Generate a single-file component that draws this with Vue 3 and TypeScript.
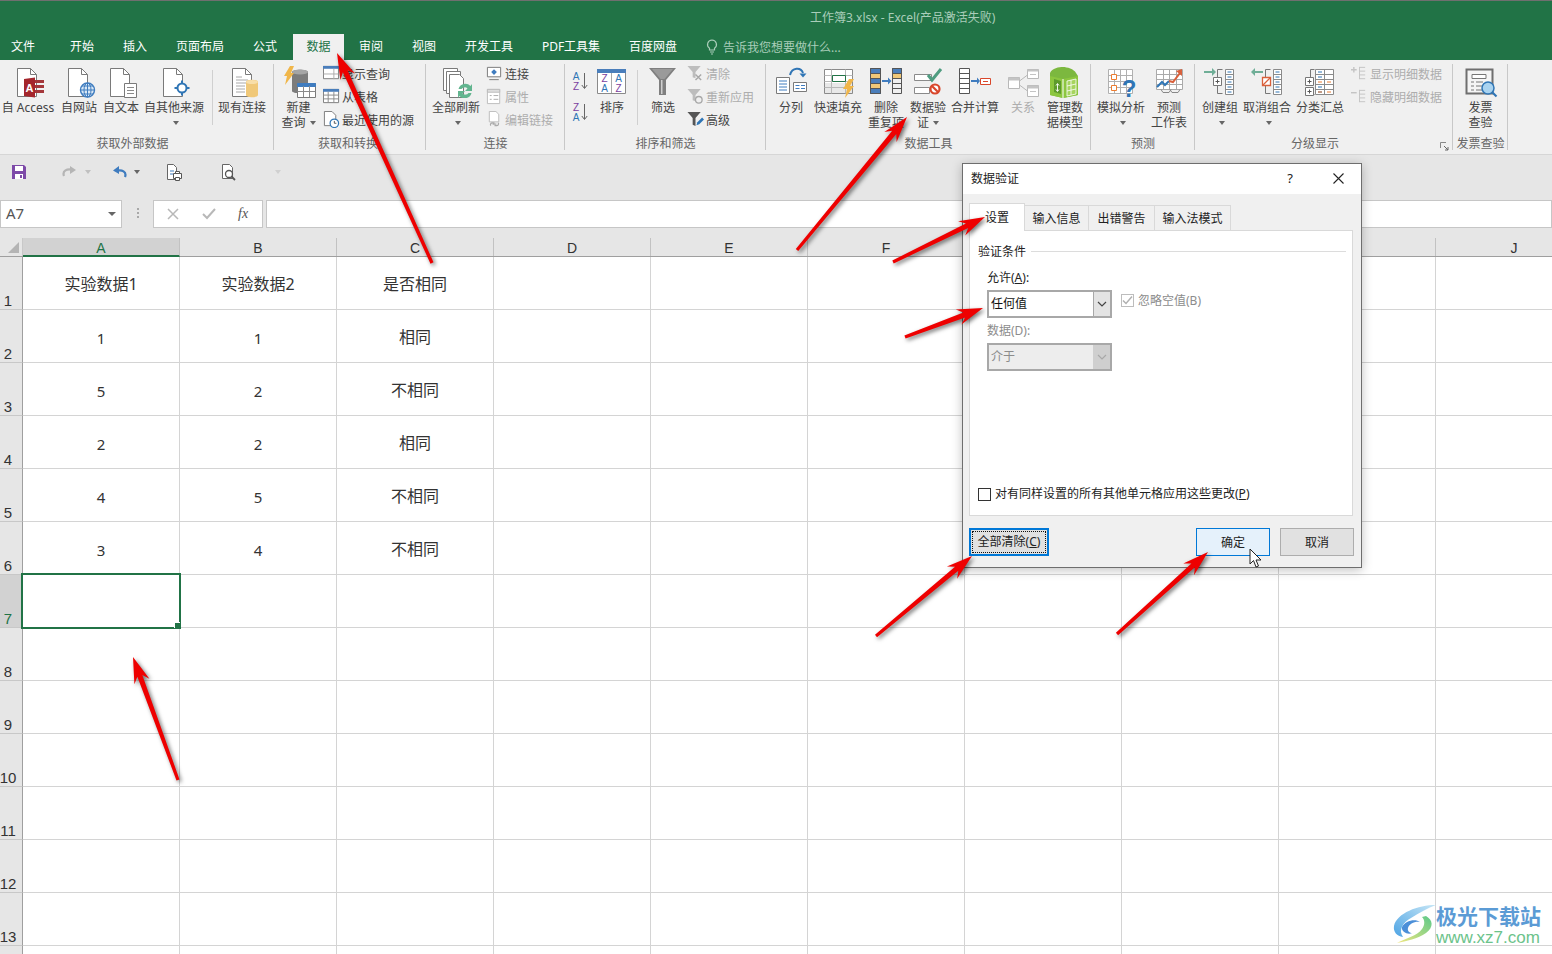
<template>
  <div class="app">
    <!-- icon sheet -->
    <svg class="sheet" width="0" height="0">
      <defs>
        <symbol id="access" viewBox="0 0 34 32"><path d="M6.500 2.500h13l6 6v22h-19z" fill="#fff" stroke="#7a7a7a"/><path d="M19.500 2.500v6h6" fill="none" stroke="#7a7a7a"/><path d="M22 14h11v3H22zM22 19h11v3H22zM22 24h11v3H22z" fill="#a4373a"/><path d="M13 13l11-1.500v20L13 30z" fill="#a4262c"/><text x="18.500" y="26" font-size="11" font-weight="700" fill="#fff" text-anchor="middle" font-family="Liberation Sans">A</text></symbol>
        <symbol id="web" viewBox="0 0 34 32"><path d="M6.500 2.500h13l6 6v22h-19z" fill="#fff" stroke="#7a7a7a"/><path d="M19.500 2.500v6h6" fill="none" stroke="#7a7a7a"/><circle cx="25.500" cy="24" r="7" fill="#d9e8f6" stroke="#3f7cbf" stroke-width="1.400"/><path d="M18.500 24h14M25.500 17v14M20 20h11M20 28h11" stroke="#3f7cbf" fill="none"/><ellipse cx="25.500" cy="24" rx="3.500" ry="7" fill="none" stroke="#3f7cbf"/></symbol>
        <symbol id="textdoc" viewBox="0 0 34 32"><path d="M6.500 2.500h13l6 6v22h-19z" fill="#fff" stroke="#7a7a7a"/><path d="M19.500 2.500v6h6" fill="none" stroke="#7a7a7a"/><path d="M20.500 17.500h12v14h-12z" fill="#fff" stroke="#7a7a7a"/><path d="M23 21.500h7M23 24.500h7M23 27.500h7" stroke="#8a8a8a"/></symbol>
        <symbol id="other" viewBox="0 0 34 32"><path d="M6.500 2.500h13l6 6v22h-19z" fill="#fff" stroke="#7a7a7a"/><path d="M19.500 2.500v6h6" fill="none" stroke="#7a7a7a"/><circle cx="25" cy="22" r="4.500" fill="#fff" stroke="#2f75b5" stroke-width="2"/><path d="M25 14.500v3.500M25 26v3.500M17.500 22H21M29 22h3.500" stroke="#2f75b5" stroke-width="2"/></symbol>
        <symbol id="existing" viewBox="0 0 34 32"><path d="M7.500 2.500h13l6 6v22h-19z" fill="#fff" stroke="#7a7a7a"/><path d="M20.500 2.500v6h6" fill="none" stroke="#7a7a7a"/><path d="M11 11h6M11 14h12M11 17h10M11 20h9M11 23h9M11 26h9" stroke="#a8a8a8"/><path d="M21 16c0-3 12-3 12 0v13c0 3-12 3-12 0z" fill="#f0c878"/><ellipse cx="27" cy="16" rx="6" ry="2" fill="#f8dea8"/></symbol>
        <symbol id="newquery" viewBox="0 0 34 32"><path d="M10 6c0-3 16-3 16 0v19c0 3-16 3-16 0z" fill="#7c7c7c"/><ellipse cx="18" cy="6" rx="8" ry="2.500" fill="#a5a5a5"/><path d="M8 0h4l-3 7h3L3 19l2-9H2z" fill="#f0b64a"/><path d="M15.500 17.500h18v14h-18z" fill="#fff" stroke="#7a7a7a"/><path d="M15.500 17.500h18v3h-18z" fill="#3f7cbf" stroke="#3f7cbf"/><path d="M15.500 25.500h18M21.500 20v11M27.500 20v11" stroke="#8a8a8a"/></symbol>
        <symbol id="refresh" viewBox="0 0 34 32"><path d="M4.500 2.500h14v22h-14z" fill="#fff" stroke="#7a7a7a"/><path d="M7.500 5.500h14v22h-14z" fill="#fff" stroke="#7a7a7a"/><path d="M10.500 8.500h10l4 4v19h-14z" fill="#fff" stroke="#7a7a7a"/><path d="M19.500 23a7 7 0 0 1 12-3l1.500-2v7h-7l2.500-2.500a4 4 0 0 0-6 .5zM32.500 27a7 7 0 0 1-12 3l-1.500 2v-7h7l-2.500 2.500a4 4 0 0 0 6-.5z" fill="#62b58f"/></symbol>
        <symbol id="sort" viewBox="0 0 34 32"><path d="M2.500 3.500h28v24h-28z" fill="#fff" stroke="#8a8a8a"/><path d="M2 3h29v4H2z" fill="#4a7ebb"/><path d="M16.500 7v20" stroke="#a8a8a8"/><g font-family="Liberation Sans" font-size="10" text-anchor="middle"><text x="9.500" y="16" fill="#7b3fa0">Z</text><text x="23.500" y="16" fill="#2f75b5">A</text><text x="9.500" y="26" fill="#2f75b5">A</text><text x="23.500" y="26" fill="#7b3fa0">Z</text></g></symbol>
        <symbol id="funnel" viewBox="0 0 34 32"><path d="M3 2h27L20 14v15h-7V14z" fill="#7f7f7f"/><path d="M6 3h21L18.500 13h-4z" fill="#9a9a9a"/><path d="M15 14h1.500v14H15z" fill="#cfcfcf"/></symbol>
        <symbol id="split" viewBox="0 0 34 32"><path d="M2.500 11.500h13v16h-13z" fill="#fff" stroke="#7a7a7a"/><path d="M5 15h8M5 18h8M5 21h8M5 24h8" stroke="#3f7cbf"/><path d="M19.500 16.500h13v9h-13z" fill="#fff" stroke="#7a7a7a"/><path d="M21.500 19.500h4M27 19.500h4M21.500 22.500h4M27 22.500h4" stroke="#3f7cbf"/><path d="M16 9c2-8 11-8 13-2" fill="none" stroke="#2f75b5" stroke-width="2"/><path d="M25.500 7.500h7l-3.500 4z" fill="#2f75b5"/></symbol>
        <symbol id="flash" viewBox="0 0 34 32"><path d="M3.500 3.500h28v24h-28z" fill="#fff" stroke="#8a8a8a"/><path d="M4 17h27v10H4z" fill="#e8e8e8"/><path d="M3.500 9.500h28M3.500 15.500h28M3.500 21.500h28M10.500 3.500v24M24.500 3.500v24" stroke="#b8b8b8"/><path d="M11.500 9.500h13v6h-13z" fill="#fff" stroke="#217346"/><path d="M28 13h5l-4 7h4L24 32l2-9h-4z" fill="#f0b64a"/></symbol>
        <symbol id="dedupe" viewBox="0 0 34 32"><path d="M1 2h11v26H1z" fill="#4a7ebb"/><path d="M1 7.500h11v5H1zM1 18h11v5H1z" fill="#f0c878"/><path d="M1.500 2.500h10v25h-10zM1.500 7.500h10M1.500 12.500h10M1.500 17.500h10M1.500 22.500h10" fill="none" stroke="#555"/><path d="M23 2h10v6H23z" fill="#4a7ebb"/><path d="M23 8h10v5H23z" fill="#f0c878"/><path d="M23.500 2.500h9v25h-9zM23.500 7.500h9M23.500 12.500h9M23.500 17.500h9M23.500 22.500h9" fill="none" stroke="#555"/><path d="M13 14h6v-2.500l3.500 3.500-3.500 3.500V16h-6z" fill="#3f7cbf"/></symbol>
        <symbol id="validate" viewBox="0 0 34 32"><path d="M3.500 8.500h17v6h-17zM3.500 21.500h15v6h-15z" fill="#fff" stroke="#8a8a8a"/><path d="M17 9l4 5 9-11" fill="none" stroke="#4f9c80" stroke-width="3"/><circle cx="24" cy="23" r="4.500" fill="#fff" stroke="#d9472b" stroke-width="2.200"/><path d="M21 20l6 6" stroke="#d9472b" stroke-width="2.200"/></symbol>
        <symbol id="consolidate" viewBox="0 0 34 32"><path d="M1.500 2.500h10v25h-10zM1.500 7.500h10M1.500 12.500h10M1.500 17.500h10M1.500 22.500h10" fill="#fff" stroke="#555"/><path d="M13 14h6v-2.500l3 3.500-3 3.500V16h-6z" fill="#3f7cbf"/><path d="M22.500 12.500h10v6h-10z" fill="#fff" stroke="#d9472b"/><path d="M25 15.500h5" stroke="#d9472b"/></symbol>
        <symbol id="relation" viewBox="0 0 34 32"><g fill="#fff" stroke="#b8b8b8"><path d="M2.500 11.500h11v11h-11zM21.500 3.500h11v9h-11zM21.500 19.500h11v11h-11z"/><path d="M13.500 15l8-6M13.500 19l8 6" fill="none"/></g><path d="M2.500 11.500h11v3h-11zM21.500 3.500h11v2h-11zM21.500 19.500h11v3h-11z" fill="#c4c4c4"/><path d="M24 8.500h6M24 25.500h6" stroke="#c4c4c4"/></symbol>
        <symbol id="model" viewBox="0 0 34 32"><path d="M2 7c2-5 9-6 13-6s11 2 13 6l2 3v19l-15 3-13-3z" fill="#7cb83f"/><path d="M2 10l13 3 15-3v19l-15 3-13-3z" fill="#8cc63f"/><path d="M15 13v19" stroke="#fff"/><path d="M19 15l9-2v15l-9 2z" fill="#a6d45e" stroke="#fff" stroke-width=".8"/><path d="M19 20l9-2M19 25l9-2M23 14v15" stroke="#fff" stroke-width=".8"/><path d="M6 13l7 2v13l-7-2z" fill="#5d9a2c"/><path d="M9.500 18v7M8 19.500l1.500-2 1.500 2M8 23.500l1.500 2 1.500-2" fill="none" stroke="#fff" stroke-width=".9"/></symbol>
        <symbol id="whatif" viewBox="0 0 34 32"><path d="M4.500 3.500h24v25h-24z" fill="#fff"/><path d="M4.500 3.500h24M4.500 9.500h24M4.500 15.500h24M4.500 21.500h24M4.500 27.500h24M4.500 3.500v24M10.500 3.500v24M16.500 3.500v24M22.500 3.500v24M28.500 3.500v24" fill="none" stroke="#b0b0b0"/><path d="M7.500 8.500h5v5h-5zM7.500 19.500h5v5h-5z" fill="#fff" stroke="#ed7d31"/><text x="25" y="31" font-size="24" font-weight="700" fill="#2f75b5" text-anchor="middle" font-family="Liberation Sans">?</text></symbol>
        <symbol id="forecast" viewBox="0 0 34 32"><path d="M4.500 3.500h26v20h-26z" fill="#fff"/><path d="M4.500 3.500h26M4.500 8.500h26M4.500 13.500h26M4.500 18.500h26M4.500 23.500h26M4.500 3.500v20M11.500 3.500v20M17.500 3.500v20M24.500 3.500v20M30.500 3.500v20" fill="none" stroke="#aaa"/><path d="M5 21l5-5 3 3 4-4" fill="none" stroke="#2f75b5" stroke-width="2"/><path d="M17 15l4 1 7-9" fill="none" stroke="#d9603b" stroke-width="2"/><path d="M24 5l6-2 0 7z" fill="#d9603b"/><path d="M9 23.500l2 3h6l2-3M18 23.500l2 3h6l2-3" fill="none" stroke="#888"/></symbol>
        <symbol id="group" viewBox="0 0 34 32"><path d="M1 5h8V2l4 4-4 4V7H1z" fill="#6fae97"/><path d="M19.500 3.500h-5v24h5" fill="none" stroke="#777"/><path d="M10.500 11.500h8v8h-8z" fill="#fff" stroke="#777"/><path d="M12.500 15.500h4M14.500 13.500v4" stroke="#555"/><path d="M22.500 3.500h8v25h-8zM22.500 8.500h8M22.500 13.500h8M22.500 18.500h8M22.500 23.500h8" fill="#fff" stroke="#8a8a8a"/><path d="M24.500 6h4M24.500 11h4M24.500 16h4M24.500 21h4M24.500 26h4" stroke="#2f75b5"/></symbol>
        <symbol id="ungroup" viewBox="0 0 34 32"><path d="M13 5H5V2L1 6l4 4V7h8z" fill="#6fae97"/><path d="M20.500 3.500h-5v24h5" fill="none" stroke="#777"/><path d="M12.500 11.500h8v8h-8z" fill="#fff" stroke="#d9603b" stroke-width="1.300"/><path d="M13 19l7-7" stroke="#d9603b" stroke-width="1.300"/><path d="M23.500 3.500h8v25h-8zM23.500 8.500h8M23.500 13.500h8M23.500 18.500h8M23.500 23.500h8" fill="#fff" stroke="#8a8a8a"/><path d="M25.500 6h4M25.500 11h4M25.500 16h4M25.500 21h4M25.500 26h4" stroke="#2f75b5"/></symbol>
        <symbol id="subtotal" viewBox="0 0 34 32"><path d="M11.500 3.500h-4v8M11.500 28.500h-4v-1" fill="none" stroke="#777"/><path d="M2.500 11.500h8v8h-8zM2.500 21.500h8v8h-8z" fill="#fff" stroke="#777"/><path d="M4.500 15.500h4M6.500 13.500v4M4.500 25.500h4M6.500 23.500v4" stroke="#555"/><path d="M12.500 3.500h18v25h-18zM12.500 8.500h18M12.500 13.500h18M12.500 18.500h18M12.500 23.500h18M21.500 3.500v25" fill="#fff" stroke="#8a8a8a"/><path d="M15 6h4M15 11h4M15 21h4M15 26h4" stroke="#2f75b5"/><path d="M15 16h4M24 16h4M24 26h4M15 26h4" stroke="#ed7d31"/></symbol>
        <symbol id="invoice" viewBox="0 0 34 32"><path d="M2.500 3.500h26v24h-26z" fill="#f5f5f5" stroke="#6f6f6f" stroke-width="2"/><path d="M8 8.500h14v4H8z" fill="#fff" stroke="#777"/><path d="M7 16h3M12 16h7M7 20h3M12 20h6M7 24h3M12 24h6" stroke="#777"/><circle cx="24" cy="22" r="6" fill="#a9d3f0" stroke="#2f75b5" stroke-width="1.500"/><path d="M28.500 26.500l4 4" stroke="#2f75b5" stroke-width="2.200"/></symbol>

        <symbol id="s-query" viewBox="0 0 18 18"><path d="M.5 1.500h16v13H.5z" fill="#fff" stroke="#7a7a7a"/><path d="M0 1h17v3H0z" fill="#4a7ebb"/><path d="M.5 9.500h16M11.500 4v11" stroke="#aaa"/></symbol>
        <symbol id="s-table" viewBox="0 0 18 18"><path d="M.5 1.500h16v14H.5z" fill="#fff" stroke="#7a7a7a"/><path d="M0 1h17v3H0z" fill="#4a7ebb"/><path d="M.5 7.500h16M.5 11.500h16M5.500 4v11M11.500 4v11" stroke="#8a8a8a"/></symbol>
        <symbol id="s-recent" viewBox="0 0 18 18"><path d="M1.500 .5h8l4 4v11h-12z" fill="#fff" stroke="#7a7a7a"/><circle cx="12" cy="13" r="4.500" fill="#fff" stroke="#2f75b5" stroke-width="1.300"/><path d="M12 10.500V13h2.200" fill="none" stroke="#555"/></symbol>
        <symbol id="s-conn" viewBox="0 0 18 18"><path d="M1.500 2.500h14v10h-14z" fill="#fff" stroke="#777"/><path d="M8.500 4.500l3 3-3 3-3-3z" fill="#3f7cbf"/><path d="M3.500 15.500h10" stroke="#777"/></symbol>
        <symbol id="s-props" viewBox="0 0 18 18"><path d="M1.500 1.500h13v15h-13z" fill="#fff" stroke="#bbb"/><path d="M1.500 1.500h13v3h-13z" fill="#ddd" stroke="#bbb"/><path d="M4 8h2M8 8h5M4 12h2M8 12h5" stroke="#aaa"/></symbol>
        <symbol id="s-link" viewBox="0 0 18 18"><path d="M3.500 .5h7l3 3v8h-10z" fill="#fff" stroke="#bbb"/><path d="M5 15.500a2 2 0 0 1 2-3h2M13 12.500a2 2 0 0 1-2 3H9M7 14h4" fill="none" stroke="#aaa" stroke-width="1.300"/></symbol>
        <symbol id="s-az" viewBox="0 0 18 22"><g font-family="Liberation Sans" font-size="10" text-anchor="middle"><text x="5" y="9" fill="#2f75b5">A</text><text x="5" y="19" fill="#7b3fa0">Z</text></g><path d="M13.500 2v15M10.800 14l2.700 3.500 2.700-3.500" fill="none" stroke="#666"/></symbol>
        <symbol id="s-za" viewBox="0 0 18 22"><g font-family="Liberation Sans" font-size="10" text-anchor="middle"><text x="5" y="9" fill="#7b3fa0">Z</text><text x="5" y="19" fill="#2f75b5">A</text></g><path d="M13.500 2v15M10.800 14l2.700 3.500 2.700-3.500" fill="none" stroke="#666"/></symbol>
        <symbol id="s-clear" viewBox="0 0 18 18"><path d="M.5 1h14L9 7.500V14l-3-1V7.500z" fill="#bdbdbd"/><path d="M9 10l6 6M15 10l-6 6" stroke="#a8a8a8" stroke-width="1.500"/></symbol>
        <symbol id="s-reapply" viewBox="0 0 18 18"><path d="M.5 1h14L9 7.500V14l-3-1V7.500z" fill="#bdbdbd"/><circle cx="12.500" cy="12.500" r="3.500" fill="none" stroke="#a8a8a8" stroke-width="1.400"/></symbol>
        <symbol id="s-adv" viewBox="0 0 18 18"><path d="M.5 1h14L9 7.500V16l-3-1.500v-7z" fill="#555"/><path d="M10 15l1-3 5-5 2 2-5 5z" fill="#2f75b5"/></symbol>
        <symbol id="s-show" viewBox="0 0 18 18"><path d="M3 2v6M0 5h6" stroke="#c4c4c4" stroke-width="1.500"/><path d="M9 2.500h6M9 6.500h6M9 10.500h6M9 14.500h6M9 2v13" stroke="#c4c4c4"/></symbol>
        <symbol id="s-hide" viewBox="0 0 18 18"><path d="M0 5h6" stroke="#c4c4c4" stroke-width="1.500"/><path d="M9 2.500h6M9 6.500h6M9 10.500h6M9 14.500h6M9 2v13" stroke="#c4c4c4"/></symbol>
      </defs>
    </svg>

    <header class="titlebar">
      <div class="title">工作簿3.xlsx - Excel(产品激活失败)</div>
      <nav class="tabs">
        <div
          v-for="t in tabs"
          :key="t.name"
          class="tab"
          :class="{ active: t.name === '数据' }"
          :style="{ width: t.w + 'px' }"
        >{{ t.name }}</div>
        <div class="tellme">
          <svg width="12" height="16" viewBox="0 0 12 16"><path d="M6 1a4.500 4.500 0 0 0-2.500 8.200V11h5V9.200A4.500 4.500 0 0 0 6 1zM4 13h4M5 15h2" fill="none" stroke="#a9cdb9" stroke-width="1.200"/></svg>
          <span>告诉我您想要做什么...</span>
        </div>
      </nav>
    </header>

    <section class="ribbon">
      <div
        v-for="g in groups"
        :key="g.label"
        class="group"
        :style="{ width: g.w + 'px' }"
      >
        <div class="items">
          <template v-for="(it, i) in g.items" :key="i">
            <div v-if="it.kind === 'big'" class="big" :class="{ off: it.off }" :style="{ width: it.w + 'px' }">
              <svg class="big-ic" width="34" height="32"><use :href="'#' + it.icon" /></svg>
              <div v-for="(l, n) in it.lines" :key="n" class="line">
                {{ l }}<i v-if="it.caret && n === it.lines.length - 1" class="caret"></i>
              </div>
            </div>
            <div v-else-if="it.kind === 'stack'" class="stack">
              <div v-for="r in it.rows" :key="r.text" class="small" :class="{ off: r.off }">
                <svg width="17" height="17"><use :href="'#' + r.icon" /></svg>
                <span>{{ r.text }}</span>
              </div>
            </div>
            <div v-else-if="it.kind === 'az'" class="az" :style="{ width: it.w + 'px' }">
              <svg width="18" height="22"><use href="#s-az" /></svg>
              <svg width="18" height="22"><use href="#s-za" /></svg>
            </div>
            <div v-else class="sep" :class="{ line: it.line }" :style="{ width: it.w + 'px' }"></div>
          </template>
        </div>
        <div class="group-label" :style="{ paddingRight: (g.pad || 0) + 'px' }">{{ g.label }}</div>
        <svg v-if="g.launcher" class="launcher" width="9" height="9" viewBox="0 0 9 9"><path d="M.5 6V.5H6" fill="none" stroke="#888"/><path d="M4 4l4 4M8 5v3H5" fill="none" stroke="#666"/></svg>
      </div>
    </section>

    <div class="qat">
      <svg width="16" height="16" viewBox="0 0 16 16"><path d="M1 1h12l2 2v12H1z" fill="#7d4aa8"/><path d="M4 2h8v5H4z" fill="#fff"/><path d="M4 10h8v5H4z" fill="#fff"/><path d="M9 11h2v3H9z" fill="#7d4aa8"/></svg>
      <svg class="q-redo" width="15" height="14" viewBox="0 0 15 14"><path d="M2 11c-2-5 3-8 9-6" fill="none" stroke="#b5b5b5" stroke-width="2.200"/><path d="M8 1l6 4-6 4z" fill="#b5b5b5"/></svg>
      <i class="caret q-c1 soft"></i>
      <svg class="q-undo" width="15" height="14" viewBox="0 0 15 14"><path d="M13 12c2-5-3-8-9-6" fill="none" stroke="#3f7cbf" stroke-width="2.200"/><path d="M7 1L1 5.500 7 9z" fill="#3f7cbf"/></svg>
      <i class="caret q-c2"></i>
      <svg class="q-print" width="17" height="17" viewBox="0 0 17 17"><path d="M1.500 .5h6l3 3v12h-9z" fill="#fff" stroke="#666"/><path d="M4 7h4M4 10h3" stroke="#3f7cbf"/><path d="M7.500 9.500h8v5h-8z" fill="#fff" stroke="#555"/><path d="M9.500 7.500h4v2h-4zM9.500 13.500h4v3h-4z" fill="#fff" stroke="#555"/></svg>
      <svg class="q-zoom" width="16" height="17" viewBox="0 0 16 17"><path d="M1.500 .5h7l3 3v11h-10z" fill="#fff" stroke="#666"/><circle cx="8" cy="10" r="3.500" fill="#fff" stroke="#555" stroke-width="1.300"/><path d="M10.500 12.500l3.500 3.500" stroke="#555" stroke-width="1.800"/></svg>
      <i class="caret q-c3 faint"></i>
    </div>

    <div class="formula">
      <div class="namebox"><span>A7</span><i class="caret dark"></i></div>
      <div class="dots"><b></b><b></b><b></b></div>
      <div class="fxbox">
        <svg width="12" height="12" viewBox="0 0 12 12"><path d="M1 1l10 10M11 1L1 11" stroke="#b8b8b8" stroke-width="1.500"/></svg>
        <svg width="14" height="12" viewBox="0 0 14 12"><path d="M1 6l4 4 8-9" fill="none" stroke="#b8b8b8" stroke-width="2"/></svg>
        <span class="fx">fx</span>
      </div>
      <div class="input"></div>
    </div>

    <div class="sheetgrid">
      <div class="headrow">
        <div class="corner"><i></i></div>
        <div v-for="c in cols" :key="c" class="colhead" :class="{ sel: c === 'A' }">{{ c }}</div>
      </div>
      <div v-for="(r, ri) in rows" :key="ri" class="row">
        <div class="rowhead" :class="{ sel: ri === 6 }"><span v-if="ri < 13">{{ ri + 1 }}</span></div>
        <div v-for="(c, ci) in cols" :key="c" class="cell" :class="{ num: /^\d+$/.test(r[ci] || '') }">
          {{ r[ci] }}
          <div v-if="ri === 6 && ci === 0" class="selection"><i></i></div>
        </div>
      </div>
    </div>

    <div class="dialog">
      <div class="dlg-title">
        <span class="dlg-name">数据验证</span>
        <span class="help">?</span>
        <svg width="11" height="11" viewBox="0 0 11 11"><path d="M.5.5l10 10M10.500.5l-10 10" stroke="#222" stroke-width="1.100"/></svg>
      </div>
      <div class="dlg-body">
        <div class="dlg-tabs">
          <div class="dlg-tab on" style="width: 56px">设置</div>
          <div class="dlg-tab" style="width: 64px">输入信息</div>
          <div class="dlg-tab" style="width: 66px">出错警告</div>
          <div class="dlg-tab" style="width: 76px">输入法模式</div>
        </div>
        <div class="pane">
          <div class="legend"><span>验证条件</span><i></i></div>
          <div class="fields">
            <div class="lab">允许(<u>A</u>):</div>
            <div class="sel-row">
              <div class="select"><span>任何值</span><em><svg width="10" height="6" viewBox="0 0 10 6"><path d="M1 1l4 4 4-4" fill="none" stroke="#444" stroke-width="1.200"/></svg></em></div>
              <div class="chk dis"><svg width="13" height="13" viewBox="0 0 13 13"><path d="M2 6.500l3 3 6-7" fill="none" stroke="#b0b0b0" stroke-width="1.500"/></svg></div>
              <span class="chk-label">忽略空值(B)</span>
            </div>
            <div class="lab gray">数据(D):</div>
            <div class="select disabled"><span>介于</span><em><svg width="10" height="6" viewBox="0 0 10 6"><path d="M1 1l4 4 4-4" fill="none" stroke="#a8a8a8" stroke-width="1.200"/></svg></em></div>
          </div>
          <div class="apply">
            <div class="chk"></div>
            <span>对有同样设置的所有其他单元格应用这些更改(<u>P</u>)</span>
          </div>
        </div>
        <div class="dlg-foot">
          <button type="button" class="btn focus"><span>全部清除(<u>C</u>)</span></button>
          <button type="button" class="btn hover">确定</button>
          <button type="button" class="btn">取消</button>
        </div>
      </div>
    </div>

    <svg class="cursor" width="14" height="21" viewBox="0 0 14 21"><path d="M1 1v15l3.500-3.500L7 19l2.500-1-2.500-6h5z" fill="#fff" stroke="#222"/></svg>

    <div class="mark">
      <svg width="48" height="56" viewBox="0 0 48 56">
        <defs>
          <linearGradient id="swirlA" x1="1" y1="0" x2="0" y2="1"><stop offset="0" stop-color="#c6e6f6" /><stop offset="1" stop-color="#4ea4e4" /></linearGradient>
          <linearGradient id="swirlB" x1="1" y1="0" x2="0" y2="1"><stop offset="0" stop-color="#5cc98a" /><stop offset="1" stop-color="#f2e77f" /></linearGradient>
        </defs>
        <path d="M43 3C25 3 4 11 1 24c-1 6 3 10 9 11C5 28 10 20 18 16 26 11 35 6 43 3z" fill="url(#swirlA)" />
        <path d="M9 25c3-6 13-9 18-5-5-1-11 2-12 6-1 3 2 5 4 5-4 2-11-1-10-6z" fill="#4b8fd8" />
        <path d="M33 14c7 4 8 11 0 17-8 6-20 8-29 10 9-5 20-7 25-14 3-4 3-9 0-12z" fill="url(#swirlB)" />
      </svg>
      <div class="mark-text">
        <div class="mark-cn">极光下载站</div>
        <div class="mark-en">www.xz7.com</div>
      </div>
    </div>

    <svg class="arrows" width="1552" height="954">
      <polygon v-for="(a, i) in arrows" :key="i" :points="arrowPoints(a)" fill="#ee0000" />
    </svg>
  </div>
</template>

<script setup lang="ts">
type Row = { icon: string; text: string; off?: boolean }
type Item = {
  kind: 'big' | 'stack' | 'az' | 'sep'
  w?: number
  icon?: string
  lines?: string[]
  caret?: boolean
  off?: boolean
  line?: boolean
  rows?: Row[]
}

const tabs = [
  { name: '文件', w: 46 },
  { name: '开始', w: 72 },
  { name: '插入', w: 34 },
  { name: '页面布局', w: 96 },
  { name: '公式', w: 34 },
  { name: '数据', w: 51 },
  { name: '审阅', w: 54 },
  { name: '视图', w: 52 },
  { name: '开发工具', w: 78 },
  { name: 'PDF工具集', w: 86 },
  { name: '百度网盘', w: 78 }
]

const big = (w: number, icon: string, lines: string[], caret = false, off = false): Item => ({
  kind: 'big', w, icon, lines, caret, off
})
const gap = (w: number, line = false): Item => ({ kind: 'sep', w, line })

const groups: { label: string; w: number; pad?: number; launcher?: boolean; items: Item[] }[] = [
  {
    label: '获取外部数据',
    w: 274,
    pad: 9,
    items: [
      big(56, 'access', ['自 Access']),
      big(46, 'web', ['自网站']),
      big(38, 'textdoc', ['自文本']),
      big(68, 'other', ['自其他来源', ''], true),
      gap(8, true),
      big(52, 'existing', ['现有连接'])
    ]
  },
  {
    label: '获取和转换',
    w: 152,
    pad: 4,
    items: [
      big(49, 'newquery', ['新建', '查询'], true),
      {
        kind: 'stack',
        rows: [
          { icon: 's-query', text: '显示查询' },
          { icon: 's-table', text: '从表格' },
          { icon: 's-recent', text: '最近使用的源' }
        ]
      }
    ]
  },
  {
    label: '连接',
    w: 139,
    items: [
      big(60, 'refresh', ['全部刷新', ''], true),
      {
        kind: 'stack',
        rows: [
          { icon: 's-conn', text: '连接' },
          { icon: 's-props', text: '属性', off: true },
          { icon: 's-link', text: '编辑链接', off: true }
        ]
      }
    ]
  },
  {
    label: '排序和筛选',
    w: 201,
    items: [
      { kind: 'az', w: 30 },
      big(34, 'sort', ['排序']),
      gap(16, true),
      big(36, 'funnel', ['筛选']),
      gap(6),
      {
        kind: 'stack',
        rows: [
          { icon: 's-clear', text: '清除', off: true },
          { icon: 's-reapply', text: '重新应用', off: true },
          { icon: 's-adv', text: '高级' }
        ]
      }
    ]
  },
  {
    label: '数据工具',
    w: 325,
    items: [
      big(50, 'split', ['分列']),
      big(44, 'flash', ['快速填充']),
      big(52, 'dedupe', ['删除', '重复项']),
      big(32, 'validate', ['数据验', '证'], true),
      big(62, 'consolidate', ['合并计算']),
      big(34, 'relation', ['关系'], false, true),
      big(50, 'model', ['管理数', '据模型'])
    ]
  },
  {
    label: '预测',
    w: 104,
    items: [
      big(60, 'whatif', ['模拟分析', ''], true),
      big(36, 'forecast', ['预测', '工作表'])
    ]
  },
  {
    label: '分级显示',
    w: 258,
    pad: 18,
    launcher: true,
    items: [
      big(50, 'group', ['创建组', ''], true),
      big(44, 'ungroup', ['取消组合', ''], true),
      big(62, 'subtotal', ['分类汇总']),
      {
        kind: 'stack',
        rows: [
          { icon: 's-show', text: '显示明细数据', off: true },
          { icon: 's-hide', text: '隐藏明细数据', off: true }
        ]
      }
    ]
  },
  {
    label: '发票查验',
    w: 55,
    items: [big(55, 'invoice', ['发票', '查验'])]
  }
]

const cols = ['A', 'B', 'C', 'D', 'E', 'F', 'G', 'H', 'I', 'J']

const rows: string[][] = [
  ['实验数据1', '实验数据2', '是否相同'],
  ['1', '1', '相同'],
  ['5', '2', '不相同'],
  ['2', '2', '相同'],
  ['4', '5', '不相同'],
  ['3', '4', '不相同'],
  [], [], [], [], [], [], [], []
]

// tail x/y, tip x/y
const arrows = [
  [432, 263, 337, 53],
  [797, 250, 907, 117],
  [893, 262, 985, 217],
  [905, 337, 983, 308],
  [876, 636, 972, 556],
  [1117, 634, 1208, 552],
  [178, 780, 133, 657]
]

const arrowPoints = ([tx, ty, hx, hy]: number[]) => {
  const len = Math.hypot(hx - tx, hy - ty)
  const ux = (hx - tx) / len
  const uy = (hy - ty) / len
  const at = (along: number, side: number) =>
    `${(hx - ux * along - uy * side).toFixed(1)},${(hy - uy * along + ux * side).toFixed(1)}`
  return [
    at(0, 0),
    at(26, 8),
    at(20, 2.6),
    at(len, 1.6),
    at(len, -1.6),
    at(20, -2.6),
    at(26, -8)
  ].join(' ')
}
</script>

<style>
html,
body {
  margin: 0;
  background: #fff;
}
</style>

<style scoped>
.app {
  position: relative;
  width: 1552px;
  height: 954px;
  overflow: hidden;
  font-family: "Noto Sans", "Noto Sans CJK SC", sans-serif;
  font-size: 12px;
  color: #444;
  background: #fff;
  display: flex;
  flex-direction: column;
}

.sheet {
  position: absolute;
}

/* title + tabs */
.titlebar {
  height: 60px;
  flex: none;
  box-sizing: border-box;
  background: #217346;
  border-top: 1px solid #6f6f6f;
  display: flex;
  flex-direction: column;
}

.title {
  height: 33px;
  line-height: 33px;
  padding-left: 810px;
  color: #a9cdb9;
}

.tabs {
  display: flex;
  height: 26px;
}

.tab {
  line-height: 25px;
  text-align: center;
  color: #fff;
  flex: none;
}

.tab.active {
  margin-left: 11px;
  background: #f0f0f0;
  color: #217346;
}

.tellme {
  display: flex;
  align-items: center;
  gap: 5px;
  padding-left: 14px;
  color: #a9cdb9;
  height: 25px;
}

/* ribbon */
.ribbon {
  height: 95px;
  flex: none;
  box-sizing: border-box;
  background: #f0f0f0;
  border-bottom: 1px solid #d6d6d6;
  display: flex;
}

.group {
  position: relative;
  flex: none;
  display: flex;
  flex-direction: column;
  box-sizing: border-box;
}

.group::after {
  content: "";
  position: absolute;
  right: 0;
  top: 4px;
  bottom: 4px;
  width: 1px;
  background: #c8c8c8;
}

.items {
  display: flex;
  height: 76px;
}

.big {
  flex: none;
  display: flex;
  flex-direction: column;
  align-items: center;
  padding-top: 6px;
  box-sizing: border-box;
  color: #444;
}

.big-ic {
  flex: none;
  margin-bottom: 2px;
}

.line {
  height: 15px;
  line-height: 15px;
  white-space: nowrap;
}

.big.off {
  color: #adadad;
}

.caret {
  display: inline-block;
  width: 0;
  height: 0;
  margin-left: 4px;
  vertical-align: 2px;
  border-left: 3.5px solid transparent;
  border-right: 3.5px solid transparent;
  border-top: 4px solid #666;
}

.stack {
  padding-top: 2px;
  flex: none;
}

.small {
  height: 23px;
  display: flex;
  align-items: center;
  gap: 2px;
  white-space: nowrap;
}

.small.off {
  color: #adadad;
}

.az {
  flex: none;
  display: flex;
  flex-direction: column;
  align-items: center;
  gap: 9px;
  padding-top: 11px;
  box-sizing: border-box;
}

.sep {
  flex: none;
  position: relative;
}

.sep.line::after {
  content: "";
  position: absolute;
  left: 50%;
  top: 10px;
  height: 55px;
  width: 1px;
  background: #d0d0d0;
}

.group-label {
  text-align: center;
  line-height: 16px;
  color: #666;
  white-space: nowrap;
}

.launcher {
  position: absolute;
  right: 4px;
  bottom: 3px;
}

/* quick access */
.qat {
  height: 45px;
  flex: none;
  background: #e6e6e6;
  display: flex;
  align-items: center;
  padding-left: 11px;
  padding-bottom: 11px;
  box-sizing: border-box;
}

.q-redo {
  margin-left: 35px;
}

.q-c1 {
  margin-left: 8px;
}

.soft {
  border-top-color: #c0c0c0;
}

.faint {
  border-top-color: #d0d0d0;
}

.q-undo {
  margin-left: 21px;
}

.q-c2 {
  margin-left: 7px;
}

.q-print {
  margin-left: 26px;
}

.q-zoom {
  margin-left: 38px;
}

.q-c3 {
  margin-left: 38px;
}

/* formula bar */
.formula {
  flex: none;
  height: 38px;
  background: #e6e6e6;
  display: flex;
  align-items: flex-start;
  box-sizing: border-box;
}

.namebox,
.fxbox,
.input {
  height: 28px;
  box-sizing: border-box;
  background: #fff;
  border: 1px solid #c6c6c6;
}

.namebox {
  width: 122px;
  display: flex;
  align-items: center;
  justify-content: space-between;
  padding: 0 5px 2px 5px;
  font-size: 15px;
  color: #555;
}

.caret.dark {
  border-top-color: #666;
  border-left-width: 4px;
  border-right-width: 4px;
  vertical-align: 0;
  margin-top: 2px;
}

.dots {
  width: 31px;
  display: flex;
  flex-direction: column;
  align-items: center;
  gap: 2px;
  padding-top: 8px;
}

.dots b {
  width: 2px;
  height: 2px;
  background: #a8a8a8;
}

.fxbox {
  width: 110px;
  display: flex;
  align-items: center;
  padding-left: 13px;
  gap: 23px;
}

.fx {
  font-family: "Liberation Serif", serif;
  font-style: italic;
  font-size: 14px;
  color: #555;
  margin-left: -1px;
}

.input {
  flex: 1;
  margin-left: 3px;
}

/* grid */
.sheetgrid {
  flex: none;
  background: #fff;
}

.headrow {
  display: flex;
  height: 19px;
  background: #e6e6e6;
  box-sizing: border-box;
  border-bottom: 1px solid #9f9f9f;
}

.corner {
  width: 23px;
  flex: none;
  box-sizing: border-box;
  position: relative;
  border-right: 1px solid #c8c8c8;
}

.corner i {
  position: absolute;
  right: 3px;
  bottom: 3px;
  width: 0;
  height: 0;
  border-left: 11px solid transparent;
  border-bottom: 11px solid #b4b4b4;
}

.colhead {
  width: 157px;
  flex: none;
  box-sizing: border-box;
  border-right: 1px solid #c2c2c2;
  text-align: center;
  font-family: "Liberation Sans", sans-serif;
  font-size: 14px;
  line-height: 21px;
  color: #333;
}

.colhead.sel {
  background: #d2d2d2;
  color: #217346;
  height: 19px;
  border-bottom: 2px solid #217346;
  line-height: 21px;
}

.row {
  display: flex;
  height: 53px;
}

.rowhead {
  width: 23px;
  flex: none;
  box-sizing: border-box;
  background: #e6e6e6;
  border-right: 1px solid #9f9f9f;
  border-bottom: 1px solid #c8c8c8;
  display: flex;
  align-items: flex-end;
  justify-content: center;
  padding-right: 6px;
  font-family: "Liberation Sans", sans-serif;
  font-size: 15px;
  line-height: 16px;
  color: #333;
}

.rowhead.sel {
  background: #d2d2d2;
  color: #217346;
}

.cell {
  width: 157px;
  flex: none;
  box-sizing: border-box;
  position: relative;
  border-right: 1px solid #d4d4d4;
  border-bottom: 1px solid #d4d4d4;
  display: flex;
  align-items: center;
  justify-content: center;
  font-size: 16px;
  color: #333;
}

.cell.num {
  padding-top: 4px;
  font-size: 15px;
}

.selection {
  position: absolute;
  left: -2px;
  top: -2px;
  width: 160px;
  height: 56px;
  box-sizing: border-box;
  border: 2px solid #217346;
  z-index: 1;
}

.selection i {
  position: absolute;
  right: -2px;
  bottom: -2px;
  width: 6px;
  height: 6px;
  background: #217346;
  box-shadow: -1px -1px 0 #fff;
}

/* dialog */
.dialog {
  position: absolute;
  left: 962px;
  top: 163px;
  width: 400px;
  height: 405px;
  box-sizing: border-box;
  border: 1px solid #6e6e6e;
  background: #f0f0f0;
  box-shadow: 0 2px 10px rgba(0, 0, 0, 0.25);
  display: flex;
  flex-direction: column;
  color: #222;
  z-index: 2;
}

.dlg-title {
  height: 30px;
  flex: none;
  background: #fff;
  display: flex;
  align-items: center;
  padding: 0 17px 2px 8px;
  box-sizing: border-box;
}

.dlg-name {
  flex: 1;
}

.help {
  margin-right: 40px;
  font-size: 13px;
}

.dlg-body {
  flex: 1;
  display: flex;
  flex-direction: column;
  padding: 9px 7px 0 6px;
}

.dlg-tabs {
  display: flex;
  height: 28px;
  align-items: flex-end;
  position: relative;
  z-index: 1;
}

.dlg-tab {
  height: 25px;
  box-sizing: border-box;
  line-height: 25px;
  text-align: center;
  background: #f0f0f0;
  border: 1px solid #d9d9d9;
  border-left: none;
  border-bottom: none;
  margin-bottom: 1px;
}

.dlg-tab.on {
  height: 28px;
  background: #fff;
  border-left: 1px solid #d9d9d9;
  margin-bottom: 0;
  line-height: 28px;
}

.pane {
  height: 286px;
  margin-right: 1px;
  box-sizing: border-box;
  margin-top: -1px;
  background: #fff;
  border: 1px solid #d9d9d9;
  padding: 13px 6px 13px 8px;
  display: flex;
  flex-direction: column;
}

.legend {
  display: flex;
  align-items: center;
  gap: 5px;
  line-height: 16px;
}

.legend i {
  flex: 1;
  height: 1px;
  background: #dcdcdc;
  margin-top: -2px;
}

.fields {
  padding-left: 9px;
}

.lab {
  margin-top: 10px;
  line-height: 16px;
}

.lab.gray {
  margin-top: 5px;
  color: #8c8c8c;
}

.sel-row {
  display: flex;
  margin-top: 4px;
}

.select {
  width: 125px;
  height: 28px;
  box-sizing: border-box;
  background: #fff;
  border: 2px solid #a8a8a8;
  display: flex;
  align-items: center;
  justify-content: space-between;
  padding-left: 2px;
  font-size: 12px;
  color: #111;
}

.select span {
  margin-top: -3px;
}

.select em {
  width: 17px;
  height: 24px;
  background: #e3e3e3;
  border-left: 1px solid #a8a8a8;
  box-sizing: border-box;
  display: flex;
  align-items: center;
  justify-content: center;
}

.select.disabled {
  margin-top: 4px;
  background: #ededed;
  color: #8c8c8c;
}

.select.disabled em {
  background: #cfcfcf;
  border-left: none;
}

.chk {
  width: 13px;
  height: 13px;
  box-sizing: border-box;
  border: 1px solid #333;
  background: #fff;
  flex: none;
}

.chk.dis {
  border-color: #bdbdbd;
  margin: 4px 4px 0 9px;
  position: relative;
}

.chk.dis svg {
  position: absolute;
  left: -1px;
  top: -1px;
}

.chk-label {
  color: #8c8c8c;
  line-height: 22px;
}

.apply {
  margin-top: auto;
  display: flex;
  align-items: center;
  gap: 4px;
  line-height: 16px;
}

.dlg-foot {
  display: flex;
  gap: 10px;
  margin-top: 12px;
}

.btn {
  width: 74px;
  height: 28px;
  box-sizing: border-box;
  border: 1px solid #adadad;
  background: #e1e1e1;
  font: inherit;
  color: #222;
  padding: 0;
}

.btn.focus {
  width: 80px;
  margin-right: auto;
  border: 2px solid #0078d7;
  padding: 1px;
}

.btn.focus span {
  display: block;
  height: 100%;
  line-height: 20px;
  box-sizing: border-box;
  border: 1px dotted #111;
}

.btn.hover {
  background: #e5f1fb;
  border-color: #0078d7;
}

.cursor {
  position: absolute;
  left: 1249px;
  top: 548px;
  z-index: 3;
}

/* watermark */
.mark {
  position: absolute;
  left: 1393px;
  top: 903px;
  display: flex;
  z-index: 3;
}

.mark svg {
  margin-top: -1px;
  margin-right: -5px;
}

.mark-cn {
  font-family: "Noto Sans CJK SC", sans-serif;
  font-size: 21px;
  font-weight: 700;
  line-height: 24px;
  color: #5b9bd5;
  white-space: nowrap;
}

.mark-en {
  font-family: "Liberation Sans", sans-serif;
  font-size: 17px;
  line-height: 20px;
  margin-top: 1px;
  color: #6cc38b;
}

.arrows {
  position: absolute;
  left: 0;
  top: 0;
  z-index: 4;
  pointer-events: none;
  filter: drop-shadow(2px 2px 2px rgba(0, 0, 0, 0.55));
}
</style>
